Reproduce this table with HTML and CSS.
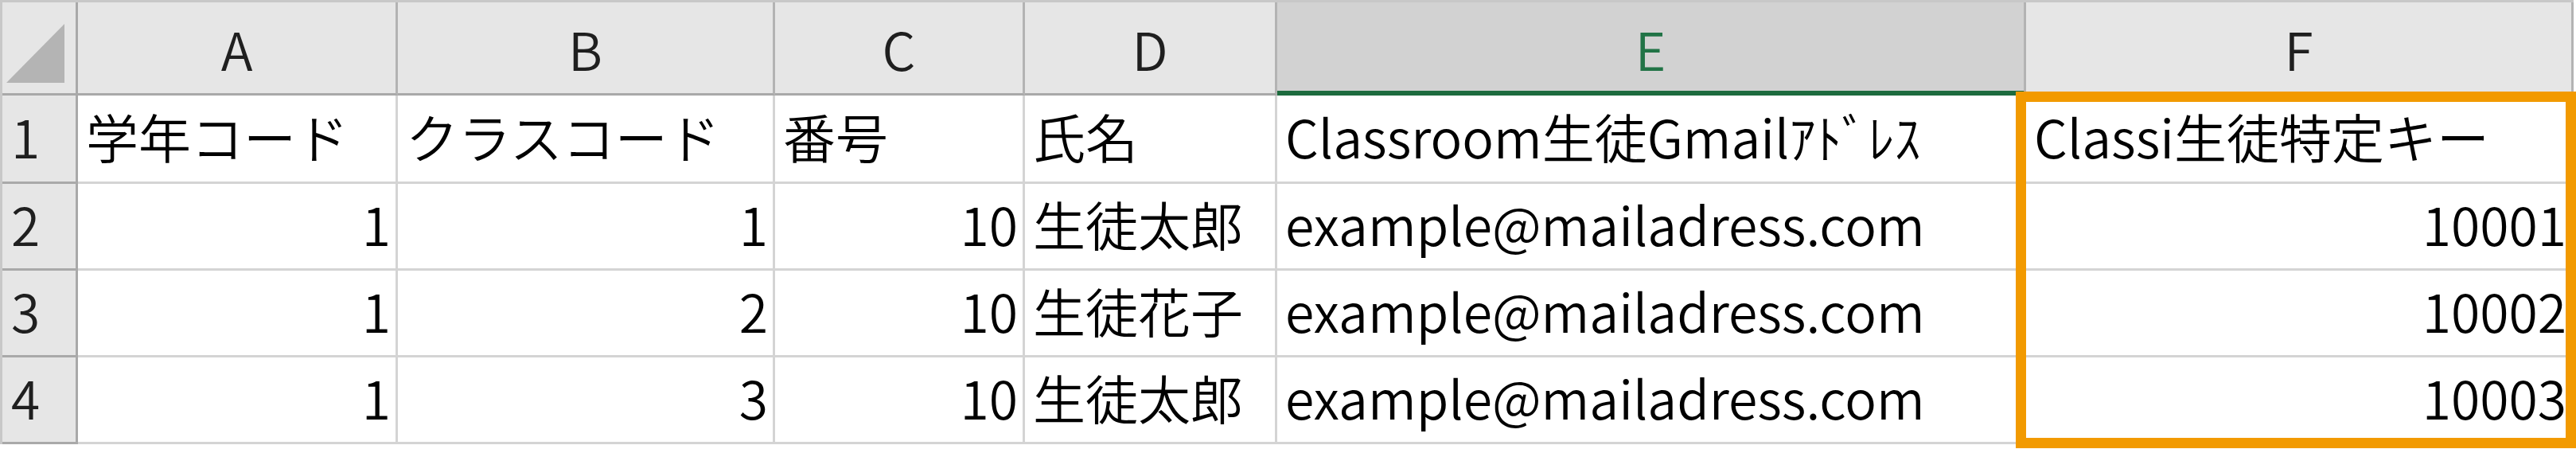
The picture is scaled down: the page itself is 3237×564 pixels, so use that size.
FILE: index.html
```html
<!DOCTYPE html>
<html lang="ja">
<head>
<meta charset="utf-8">
<title>Sheet</title>
<link rel="stylesheet" href="styles.css">
</head>
<body>
<div class="sheet">
  <div class="grid">
    <div class="corner"><svg class="tri" width="92" height="114" viewBox="0 0 92 114"><polygon points="5,101 78,101 78,27" fill="#b4b4b4"/></svg></div>
    <div class="colhead">A</div>
    <div class="colhead">B</div>
    <div class="colhead">C</div>
    <div class="colhead">D</div>
    <div class="colhead sel">E</div>
    <div class="colhead">F</div>

    <div class="rowhead r1">1</div>
    <div class="cell r1">学年コード</div>
    <div class="cell r1">クラスコード</div>
    <div class="cell r1">番号</div>
    <div class="cell r1">氏名</div>
    <div class="cell r1">Classroom生徒Gmailｱﾄﾞﾚｽ</div>
    <div class="cell r1">Classi生徒特定キー</div>

    <div class="rowhead">2</div>
    <div class="cell num">1</div>
    <div class="cell num">1</div>
    <div class="cell num">10</div>
    <div class="cell">生徒太郎</div>
    <div class="cell">example@mailadress.com</div>
    <div class="cell num">10001</div>

    <div class="rowhead">3</div>
    <div class="cell num">1</div>
    <div class="cell num">2</div>
    <div class="cell num">10</div>
    <div class="cell">生徒花子</div>
    <div class="cell">example@mailadress.com</div>
    <div class="cell num">10002</div>

    <div class="rowhead">4</div>
    <div class="cell num">1</div>
    <div class="cell num">3</div>
    <div class="cell num">10</div>
    <div class="cell">生徒太郎</div>
    <div class="cell">example@mailadress.com</div>
    <div class="cell num">10003</div>
  </div>
  <div class="highlight"></div>
</div>
</body>
</html>
```

FILE: styles.css
```css
html, body {
  margin: 0;
  padding: 0;
  background: #ffffff;
}
body {
  width: 3237px;
  height: 564px;
  overflow: hidden;
  font-family: "Noto Sans CJK JP", "Noto Sans", sans-serif;
  font-weight: 350;
  color: #000000;
}
.sheet {
  position: relative;
  width: 3237px;
  height: 564px;
}
.grid {
  display: grid;
  grid-template-columns: 95px 402px 474px 314px 317px 941px 688px;
  grid-template-rows: 117px 111px 109px 109px 109px;
  border-top: 3px solid #c8c8c8;
  border-left: 3px solid #c8c8c8;
  width: max-content;
}
.grid > div {
  box-sizing: border-box;
  display: flex;
  align-items: center;
  font-size: 66px;
  line-height: 1;
  white-space: nowrap;
  overflow: hidden;
}
.corner {
  background: #e6e6e6;
  border-right: 3px solid #a9a9a9;
  border-bottom: 3px solid #a9a9a9;
  position: relative;
}
.tri {
  display: block;
  align-self: flex-start;
}
.colhead {
  background: #e6e6e6;
  justify-content: center;
  border-right: 3px solid #b3b3b3;
  border-bottom: 3px solid #a9a9a9;
  color: #1f1f1f;
}
.colhead.sel {
  background: #d2d2d2;
  color: #217346;
  border-bottom: 6px solid #1d6b3e;
  padding-top: 3px;
}
.rowhead {
  background: #e6e6e6;
  border-right: 3px solid #a9a9a9;
  border-bottom: 3px solid #a9a9a9;
  padding: 0 0 8px 11px;
  color: #1f1f1f;
}
.cell {
  background: #ffffff;
  border-right: 3px solid #d4d4d4;
  border-bottom: 3px solid #d4d4d4;
  padding: 0 6px 8px 10px;
}
.cell.num {
  justify-content: flex-end;
}
.highlight {
  position: absolute;
  left: 2533px;
  top: 115px;
  width: 704px;
  height: 448px;
  box-sizing: border-box;
  border: 13px solid #f29a00;
}
```
